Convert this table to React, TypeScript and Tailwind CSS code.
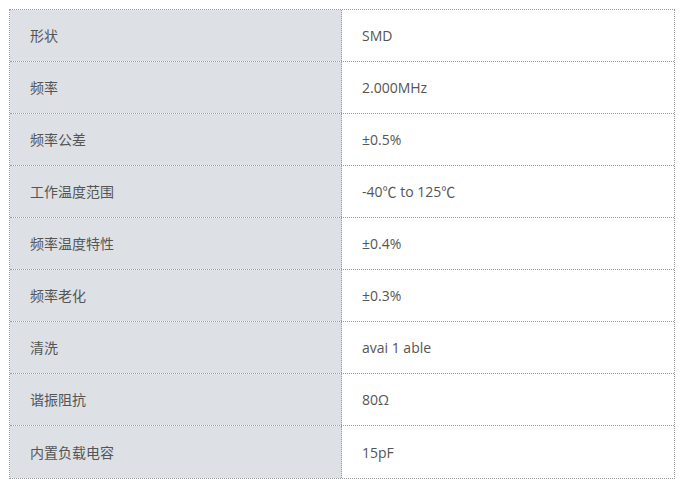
import React from "react";

const rows: [string, string][] = [
  ["形状", "SMD"],
  ["频率", "2.000MHz"],
  ["频率公差", "±0.5%"],
  ["工作温度范围", "-40℃ to 125℃"],
  ["频率温度特性", "±0.4%"],
  ["频率老化", "±0.3%"],
  ["清洗", "avai 1 able"],
  ["谐振阻抗", "80Ω"],
  ["内置负载电容", "15pF"],
];

export default function App() {
  return (
    <div className="w-[682px] h-[496px] bg-white pt-[9px] pl-[9px]" style={{ fontFamily: '"Open Sans", "Noto Sans CJK SC", sans-serif' }}>
      <div className="w-[666px] border border-dotted border-[#999]">
        {rows.map(([k, v], i) => (
          <div
            key={k}
            className={`flex h-[52px] ${i < rows.length - 1 ? "border-b border-dotted border-[#999]" : "h-[51px]"}`}
          >
            <div className="w-[332px] shrink-0 bg-[#dde1e5] border-r border-dotted border-[#999] flex items-center pl-5 text-[14px] text-[#555]" style={{ fontFamily: '"Noto Sans CJK SC", sans-serif' }}>
              {k}
            </div>
            <div className="flex-1 flex items-center pl-5 text-[14px] text-[#555]">
              {v}
            </div>
          </div>
        ))}
      </div>
    </div>
  );
}
